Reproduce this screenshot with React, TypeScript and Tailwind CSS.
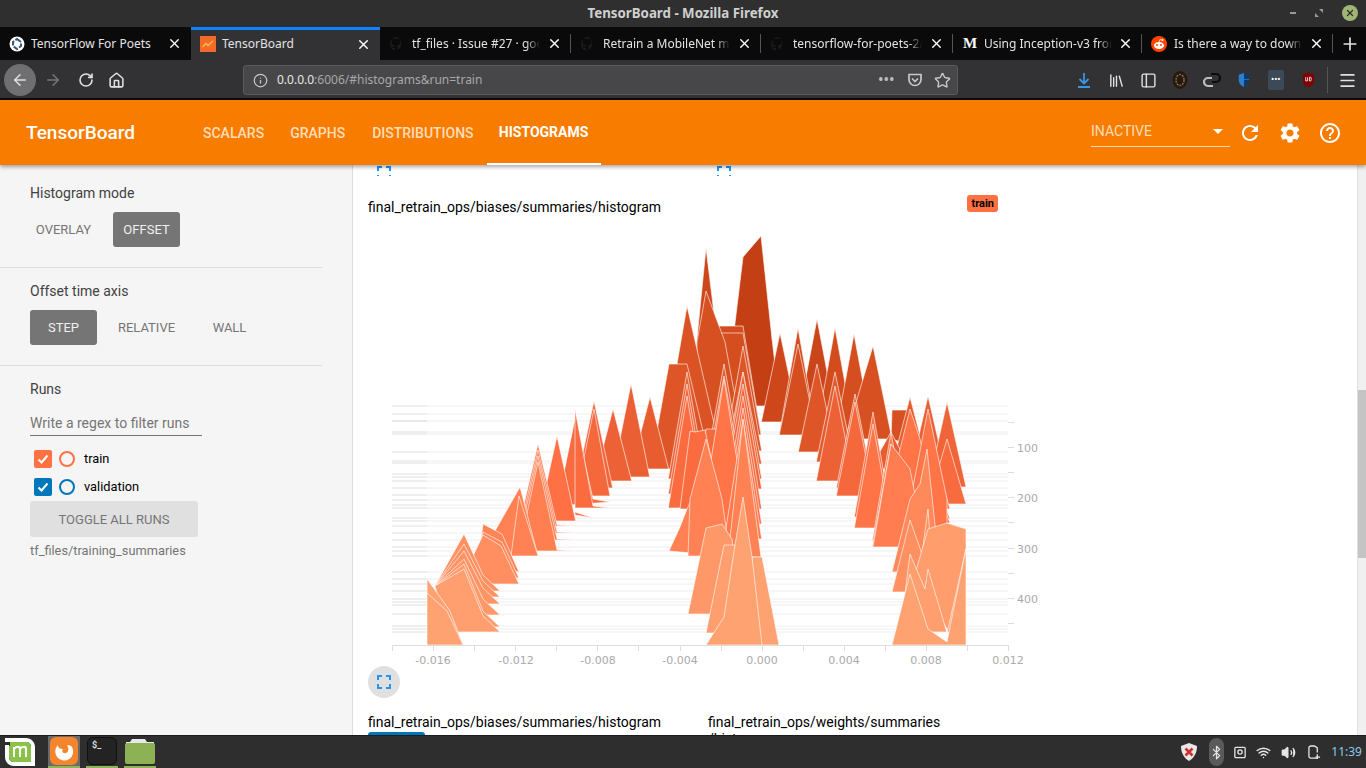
import React from "react";
import { ArrowLeft, ArrowRight, RotateCw, Home, Info, Star, Library, PanelLeft, Menu, X, Plus, Bluetooth, Wifi, Volume2 } from "lucide-react";

type Shape = { b: number; p: string };
const stops: [number, number[]][] = [
  [407, [196, 63, 20]],
  [450, [221, 85, 38]],
  [490, [240, 101, 58]],
  [520, [255, 112, 67]],
  [580, [255, 140, 94]],
  [646, [255, 162, 114]],
];
function col(b: number) {
  for (let i = 0; i < stops.length - 1; i++) {
    const [a, ca] = stops[i];
    const [z, cz] = stops[i + 1];
    if (b <= z) {
      const t = Math.max(0, (b - a) / (z - a));
      return `rgb(${ca.map((c, k) => Math.round(c + (cz[k] - c) * t)).join(",")})`;
    }
  }
  return "rgb(255,162,114)";
}
const poly = (b: number, ...n: number[]): Shape => {
  const pts: string[] = [];
  for (let i = 0; i < n.length; i += 2) pts.push(`${n[i]},${n[i + 1]}`);
  return { b, p: pts.join(" ") };
};
const tri = (x: number, peak: number, b: number, hw = 18.7) => poly(b, x - hw, b, x, peak, x + hw, b);
const nest = (x: number, peak: number, bases: number[], dp = 6) => bases.map((b, i) => tri(x, peak + i * dp, b));

const shapes: Shape[] = [
  poly(407, 725, 407, 743, 258, 761, 237, 772, 340, 780, 407),
  tri(817, 320, 418),
  poly(423, 688, 430, 706, 249, 722, 380, 724, 430),
  tri(780, 334, 423),
  ...nest(798, 329, [435, 436], 16),
  tri(835, 329, 432),
  tri(854, 335, 436),
  poly(440, 845, 440, 873, 347, 892, 440),
  poly(446, 663, 446, 687, 307, 713, 420, 720, 446),
  poly(440, 697, 440, 697, 343, 706, 292, 725, 343, 733, 387, 745, 440),
  poly(435, 708, 435, 718, 327, 743, 327, 761, 435),
  poly(436, 708, 436, 721, 334, 743, 334, 761, 436),
  tri(817, 365, 453),
  poly(452, 650, 470, 669, 365, 687, 365, 712, 470),
  tri(650, 398, 470),
  ...nest(743, 347, [452, 465], 26),
  tri(631, 385, 478),
  ...nest(835, 373, [463, 482], 14),
  tri(613, 410, 482),
  poly(473, 699, 473, 718, 432, 724, 430, 732, 473),
  tri(594, 402, 489),
  ...nest(855, 395, [489, 497], 8),
  poly(440, 891, 440, 892, 411, 907, 411, 925, 450),
  tri(910, 398, 470),
  poly(470, 870, 470, 891, 433, 910, 470),
  tri(928, 397, 478),
  poly(488, 928, 488, 947, 403, 966, 488),
  poly(505, 928, 505, 947, 440, 966, 505),
  poly(500, 697, 500, 706, 430, 724, 430, 745, 500),
  poly(509, 669, 509, 680, 483, 687, 468, 697, 465, 706, 509),
  poly(510, 680, 510, 690, 432, 695, 433, 705, 431, 720, 500, 725, 510),
  poly(510, 920, 510, 928, 440, 950, 510),
  poly(509, 575, 509, 575, 410, 593, 507, 610, 509),
  poly(507, 557, 507, 575, 420, 593, 500, 610, 503),
  poly(497, 576, 497, 594, 410, 605, 470, 610, 497),
  ...nest(687, 373, [480, 495, 509], 12),
  ...nest(724, 365, [470, 482, 495, 510], 12),
  ...nest(743, 373, [480, 490, 510, 525, 540], 12),
  poly(530, 700, 530, 724, 380, 748, 530),
  poly(519, 575, 513, 593, 519, 575, 516),
  tri(557, 437, 522),
  tri(873, 413, 518),
  tri(873, 425, 529),
  poly(530, 880, 530, 910, 410, 920, 440, 940, 530),
  poly(530, 905, 530, 928, 410, 947, 500, 947, 530),
  poly(512, 928, 512, 947, 512, 950, 520, 928, 520),
  ...[527, 534, 541, 552].map((b, i) => poly(b, 519, b, 538, 445 + i * 6, 557, b - 1, 575, b)),
  tri(891, 433, 542),
  tri(891, 445, 548),
  poly(548, 873, 548, 891, 445, 910, 470, 925, 548),
  poly(557, 495, 532, 520, 488, 538, 557, 510, 557),
  poly(557, 511, 557, 519, 497, 538, 557),
  poly(557, 669, 552, 680, 528, 687, 510, 706, 470, 725, 557),
  poly(557, 688, 557, 690, 500, 706, 440, 722, 500, 730, 557),
  poly(524, 928, 524, 947, 516, 950, 524),
  poly(573, 892, 573, 910, 500, 920, 485, 927, 450, 940, 573),
  poly(558, 728, 558, 743, 420, 761, 558),
  poly(593, 892, 593, 910, 521, 922, 555, 928, 510, 934, 593),
  poly(565, 478, 565, 483, 525, 502, 535, 519, 573),
  poly(575, 478, 575, 483, 533, 502, 543, 519, 579),
  poly(585, 473, 557, 483, 536, 501, 547, 519, 585, 470, 585),
  ...[[592, 535], [598, 545], [605, 552], [616, 560], [628, 565], [633, 570]].map(([b, p]) => poly(b, 435, 587, 464, p, 483, b - 16, 500, b, 448, b)),
  poly(615, 688, 615, 706, 529, 722, 525, 732, 540, 740, 615),
  poly(630, 905, 610, 928, 530, 947, 524, 966, 530, 966, 550, 950, 630, 947, 630, 930, 600),
  poly(633, 900, 633, 910, 555, 925, 590, 928, 570, 947, 634, 966, 550, 966, 633),
  poly(634, 706, 634, 724, 546, 735, 546, 745, 634),
  poly(646, 427, 646, 427, 580, 450, 612, 463, 646),
  poly(646, 427, 646, 427, 594, 447, 612, 463, 646),
  poly(646, 892, 646, 910, 575, 928, 630, 947, 643, 966, 550, 966, 646),
  poly(646, 752, 646, 752, 558, 762, 558, 779, 646),
  poly(646, 706, 646, 724, 618, 735, 546, 743, 498, 752, 558, 762, 646),
];
const sorted = [...shapes].sort((a, b) => a.b - b.b);

const lineYs = [407, 415, 422, 433, 435, 453, 462, 464, 475, 478, 482, 489, 496, 501, 506, 509, 519, 522, 527, 534, 541, 548, 552, 557, 573, 580, 585, 592, 600, 603, 606, 615, 627, 630, 633];

function Chart() {
  const xTicks = [392, 433, 474, 515, 556, 597, 638, 680, 721, 762, 803, 844, 885, 926, 967, 1008];
  return (
    <svg viewBox="368 225 670 450" className="block w-[670px] h-[450px] mt-[8px]">
      {lineYs.map((y) => (
        <g key={y}>
          <line x1={392} x2={1008} y1={y} y2={y} stroke="#eeeeee" strokeWidth={1} />
          <line x1={392} x2={427} y1={y} y2={y} stroke={y === 422 ? "#d9d9d9" : "#e6e6e6"} strokeWidth={1} />
        </g>
      ))}
      {sorted.map((s, i) => (
        <polygon key={i} points={s.p} fill={col(s.b)} stroke="#ffffff" strokeOpacity={0.6} strokeWidth={1} />
      ))}
      <line x1={392} x2={1008} y1={646.5} y2={646.5} stroke="#dddddd" />
      {xTicks.map((x) => (
        <line key={x} x1={x + 0.5} x2={x + 0.5} y1={646} y2={652} stroke="#dddddd" />
      ))}
      {[
        [433, "-0.016"], [516, "-0.012"], [598, "-0.008"], [680, "-0.004"], [762, "0.000"], [844, "0.004"], [926, "0.008"], [1008, "0.012"],
      ].map(([x, t]) => (
        <text key={t as string} x={x as number} y={664.5} textAnchor="middle" fontSize={11} fill="#aaaaaa" fontFamily="'DejaVu Sans',sans-serif">{t}</text>
      ))}
      {[423, 448, 473, 498, 523, 549, 574, 599, 624].map((y) => (
        <line key={y} x1={1008} x2={1014} y1={y + 0.5} y2={y + 0.5} stroke="#dddddd" />
      ))}
      {[[448, "100"], [498, "200"], [549, "300"], [599, "400"]].map(([y, t]) => (
        <text key={t as string} x={1017} y={(y as number) + 4.5} fontSize={11} fill="#aaaaaa" fontFamily="'DejaVu Sans',sans-serif">{t}</text>
      ))}
    </svg>
  );
}

function Expand({ className = "" }: { className?: string }) {
  return (
    <svg viewBox="0 0 14 14" className={`w-[14px] h-[14px] ${className}`} fill="none" stroke="#2196f3" strokeWidth={2}>
      <path d="M1 5V1H5M9 1H13V5M13 9V13H9M5 13H1V9" />
    </svg>
  );
}

const tabs = [
  { t: "TensorFlow For Poets", w: 191, i: "tf" },
  { t: "TensorBoard", w: 189, i: "tb", active: true },
  { t: "tf_files · Issue #27 · goo", w: 191, i: "gh" },
  { t: "Retrain a MobileNet mo", w: 190, i: "gh" },
  { t: "tensorflow-for-poets-2/s", w: 192, i: "gh" },
  { t: "Using Inception-v3 fron", w: 189, i: "m" },
  { t: "Is there a way to downl", w: 191, i: "r" },
];

function Fav({ k }: { k: string }) {
  if (k === "tf")
    return (
      <svg viewBox="0 0 16 16" className="w-4 h-4 shrink-0">
        <circle cx="8" cy="8" r="7.5" fill="#fff" />
        <path d="M8 3 12 6V10L8 13 4 10V6Z" fill="none" stroke="#37567a" strokeWidth="2" strokeDasharray="5 1.5" />
      </svg>
    );
  if (k === "tb")
    return (
      <svg viewBox="0 0 16 16" className="w-4 h-4 shrink-0">
        <rect width="16" height="16" fill="#f26b2a" />
        <path d="M2.5 11 6 7.5 8 9.5 13 5" fill="none" stroke="#ffc13b" strokeWidth="1.3" />
      </svg>
    );
  if (k === "gh")
    return (
      <svg viewBox="0 0 16 16" className="w-4 h-4 shrink-0">
        <path d="M8 1a7 7 0 0 0-2.2 13.6V12C3.5 12.500 3 11 3 11 2.600 10 2 9.800 2 9.800c-.7-.5 0-.5 0-.5.800 0 1.200.8 1.200.8.700 1.200 1.800.9 2.300.6 0-.5.300-.9.500-1.100C4.300 9.400 2.500 8.700 2.500 6c0-.8.300-1.400.700-1.900 0-.2-.3-.9 0-1.900 0 0 .6-.2 2 .7a7 7 0 0 1 3.600 0c1.400-.9 2-.7 2-.7.3 1 0 1.700 0 1.900.4.500.7 1.100.7 1.900 0 2.700-1.800 3.400-3.500 3.600.3.200.5.700.5 1.300v2.700A7 7 0 0 0 8 1Z" fill="#1c1c1c" />
      </svg>
    );
  if (k === "m")
    return <span className="w-4 shrink-0 text-center text-white text-[15px] font-bold leading-none [font-family:'Liberation_Serif',serif]">M</span>;
  return (
    <svg viewBox="0 0 16 16" className="w-4 h-4 shrink-0">
      <circle cx="8" cy="8" r="8" fill="#ff4500" />
      <ellipse cx="8" cy="9.500" rx="5" ry="3.500" fill="#fff" />
      <circle cx="6" cy="9" r="1" fill="#ff4500" />
      <circle cx="10" cy="9" r="1" fill="#ff4500" />
      <circle cx="11.500" cy="4" r="1" fill="#fff" />
      <path d="M8 6 9 3.500 11 4" fill="none" stroke="#fff" strokeWidth=".7" />
    </svg>
  );
}

function Tab({ t, w, i, active }: { t: string; w: number; i: string; active?: boolean }) {
  const fade = i === "gh" || i === "m" || i === "r";
  return (
    <div style={{ width: w }} className={`relative shrink-0 h-full flex items-center pl-[9px] pr-[9px] ${i === "gh" || i === "r" ? "gap-[7px]" : "gap-[6px]"} ${active ? "bg-[#323234] border-t-[3px] border-[#0a84ff] pb-[2px]" : ""}`}>
      <Fav k={i} />
      <span className={`flex-1 overflow-hidden whitespace-nowrap text-[12px] text-[#e3e3e3] ${fade ? "[mask-image:linear-gradient(to_left,transparent,black_14px)]" : ""}`}>{t}</span>
      <X size={15} strokeWidth={2.2} className="text-white shrink-0" />
      {!active && i !== "tf" && <span className="absolute right-0 top-[7px] bottom-[7px] w-px bg-[#555]" />}
    </div>
  );
}

const navCls = "text-[14px] font-medium text-[#ffdcb8]";

function ToggleBtn({ children, on }: { children: React.ReactNode; on?: boolean }) {
  return (
    <div className={`h-[35px] w-[67px] flex items-center justify-center rounded-[3px] text-[13px] ${on ? "bg-[#757575] text-[#f0f0f0]" : "text-[#757575]"}`}>{children}</div>
  );
}

function Run({ name, color, mt }: { name: string; color: string; mt: string }) {
  return (
    <div className={`flex items-center h-[18px] pl-1 ${mt}`}>
      <span style={{ background: color }} className="w-[18px] h-[18px] rounded-[2px] flex items-center justify-center">
        <svg viewBox="0 0 14 14" className="w-[14px] h-[14px]" fill="none" stroke="#fff" strokeWidth="2"><path d="M2.500 7.500 5.500 10.500 11.500 3.500" /></svg>
      </span>
      <span style={{ borderColor: color }} className="ml-[7px] w-[16px] h-[16px] rounded-full border-2" />
      <span className="ml-[9px] text-[12.8px] text-black">{name}</span>
    </div>
  );
}

function Slot({ children }: { children: React.ReactNode }) {
  return <div className="w-[32px] flex items-center justify-center">{children}</div>;
}

export default function App() {
  return (
    <div className="w-[1366px] h-[768px] overflow-hidden flex flex-col bg-white [font-family:Roboto,sans-serif]">
      {/* Title bar */}
      <div className="relative h-[27px] shrink-0 bg-[#2f2f2f] flex items-center justify-center [font-family:'Noto_Sans',sans-serif]">
        <span className="text-[13.3px] font-bold text-[#cfcfcf]">TensorBoard - Mozilla Firefox</span>
        <div className="absolute right-[8px] top-[5px] flex items-center gap-[19px]">
          <span className="w-[6px] h-[2px] bg-[#999]" />
          <svg viewBox="0 0 10 10" className="w-[8px] h-[8px]"><path d="M5 0H10V5ZM5 10H0V5Z" fill="#999" /></svg>
          <span className="w-[16px] h-[16px] rounded-full bg-[#9fb573] flex items-center justify-center"><X size={10} strokeWidth={3} className="text-[#2f2f2f]" /></span>
        </div>
      </div>
      {/* Tabs */}
      <div className="h-[33px] shrink-0 bg-[#0a0a0a] flex items-stretch [font-family:'Noto_Sans',sans-serif]">
        {tabs.map((t, i) => <Tab key={i} {...t} />)}
        <div className="flex-1 flex items-center justify-center"><Plus size={20} strokeWidth={2} className="text-[#e3e3e3]" /></div>
      </div>
      {/* Toolbar */}
      <div className="h-[40px] shrink-0 bg-[#323234] border-b-2 border-[#0c0c0c] pt-[2px] flex items-center text-[#e0e0e0] [font-family:'Noto_Sans',sans-serif]">
        <div className="ml-[4px] w-[32px] h-[32px] rounded-full bg-[#6f6f71] flex items-center justify-center"><ArrowLeft size={18} /></div>
        <ArrowRight size={18} className="ml-[8px] text-[#77777a]" />
        <RotateCw size={16} strokeWidth={2.4} className="ml-[16px]" />
        <Home size={17} strokeWidth={2.2} className="ml-[14px]" />
        <div className="ml-[118px] w-[715px] h-[30px] bg-[#474749] border border-[#5a5a5c] rounded-[3px] flex items-center pl-[9px] pr-[6px]">
          <Info size={15} className="text-[#c8c8c8]" />
          <span className="ml-[9px] text-[12px] text-[#e8e8e8]">0.0.0.0</span>
          <span className="text-[12px] text-[#a8a8a8]">:6006/#histograms&amp;run=train</span>
          <span className="ml-auto text-[#bdbdbd] text-[12px] font-bold tracking-[1px]">•••</span>
          <svg viewBox="0 0 16 16" className="ml-[12px] w-[16px] h-[16px]" fill="none" stroke="#c8c8c8" strokeWidth="1.700"><path d="M2 2.500H14V7.500A6 6 0 0 1 2 7.500Z" /><path d="M5 6.500 8 9.500 11 6.500" /></svg>
          <Star size={17} strokeWidth={2} className="ml-[11px] text-[#c8c8c8]" />
        </div>
        <div className="ml-[110px] flex items-center">
          <Slot><svg viewBox="0 0 16 16" className="w-[16px] h-[16px]" fill="none" stroke="#3a94e8" strokeWidth="1.800"><path d="M8 1V11M3.500 7 8 11.500 12.500 7M2 15H14" /></svg></Slot>
          <Slot><Library size={17} /></Slot>
          <Slot><PanelLeft size={17} /></Slot>
          <Slot><svg viewBox="0 0 16 20" className="w-[16px] h-[20px]"><ellipse cx="8" cy="10" rx="7.500" ry="9" fill="#241a12" /><ellipse cx="8" cy="10" rx="4" ry="5.500" fill="none" stroke="#8a6a3c" strokeWidth="1.500" strokeDasharray="2 1" /></svg></Slot>
          <Slot><svg viewBox="0 0 18 18" className="w-[18px] h-[18px]" fill="none" strokeWidth="2.200"><path d="M8 3H13A3.500 3.500 0 0 1 13 11H9" stroke="#0c0c0c" /><path d="M10 15H5A3.500 3.500 0 0 1 5 7H9" stroke="#bdbdbd" /></svg></Slot>
          <Slot><svg viewBox="0 0 16 18" className="w-[14px] h-[18px]"><path d="M8 1 14 3V9C14 13 11 15.500 8 17Z" fill="#103a66" /><path d="M8 1 2 3V9C2 13 5 15.500 8 17V9H14V8H8Z" fill="#2a7fd0" /></svg></Slot>
          <Slot><span className="w-[16px] h-[20px] rounded-[2px] bg-[#3c4a57] flex items-center justify-center text-white text-[7px] font-bold tracking-[.5px]">•••</span></Slot>
          <Slot><svg viewBox="0 0 16 18" className="w-[15px] h-[18px]"><path d="M8 1 14 3V10C14 13 11 15.500 8 17 5 15.500 2 13 2 10V3Z" fill="#800000" /><path d="M5 6V10H7V6M9 6V10H10.500L11 8 10.500 6Z" fill="none" stroke="#eee" strokeWidth=".9" /></svg></Slot>
        </div>
        <span className="ml-[3px] w-px h-[26px] bg-[#555]" />
        <div className="w-[38px] flex justify-center"><Menu size={19} strokeWidth={2.2} /></div>
      </div>
      {/* Orange header */}
      <div className="relative z-10 h-[65px] shrink-0 bg-[#f77c00] shadow-[0_2px_4px_rgba(0,0,0,.35)] flex items-center pl-[26px]">
        <span className="text-[19px] font-medium text-white pt-[2px]">TensorBoard</span>
        <div className="ml-[68px] flex items-center h-full pt-[2px]">
          <span className={navCls}>SCALARS</span>
          <span className={`ml-[26px] ${navCls}`}>GRAPHS</span>
          <span className={`ml-[27px] ${navCls}`}>DISTRIBUTIONS</span>
          <div className="relative ml-[13px] h-full w-[114px] flex items-center justify-center text-[14px] font-bold text-white border-b-2 border-white">HISTOGRAMS</div>
        </div>
        <div className="ml-auto mr-[136px] w-[139px] h-[30px] border-b border-[#ffd9ae] flex items-center justify-between mt-[-2px] pt-[1px]">
          <span className="text-[14px] text-[#ffdcb8]">INACTIVE</span>
          <span className="mr-[7px] w-0 h-0 border-x-[5px] border-x-transparent border-t-[5px] border-t-white" />
        </div>
        <div className="absolute right-[24px] top-[21px] flex items-center gap-[16px] text-white">
          <svg viewBox="0 0 24 24" className="w-[24px] h-[24px]" fill="#fff"><path d="M17.65 6.35C16.2 4.9 14.21 4 12 4c-4.42 0-7.99 3.58-7.99 8s3.57 8 7.99 8c3.73 0 6.84-2.55 7.73-6h-2.08c-.82 2.33-3.04 4-5.65 4-3.31 0-6-2.69-6-6s2.69-6 6-6c1.66 0 3.14.69 4.22 1.78L13 11h7V4l-2.35 2.35z" /></svg>
          <svg viewBox="0 0 24 24" className="w-[24px] h-[24px]" fill="#fff"><path d="M19.14 12.94c.04-.3.06-.61.06-.94 0-.32-.02-.64-.07-.94l2.03-1.58c.18-.14.23-.41.12-.61l-1.92-3.32c-.12-.22-.37-.29-.59-.22l-2.39.96c-.5-.38-1.03-.7-1.62-.94l-.36-2.54c-.04-.24-.24-.41-.48-.41h-3.84c-.24 0-.43.17-.47.41l-.36 2.54c-.59.24-1.13.57-1.62.94l-2.39-.96c-.22-.08-.47 0-.59.22L2.74 8.87c-.12.21-.08.47.12.61l2.03 1.58c-.05.3-.09.63-.09.94s.02.64.07.94l-2.03 1.58c-.18.14-.23.41-.12.61l1.92 3.32c.12.22.37.29.59.22l2.39-.96c.5.38 1.03.7 1.62.94l.36 2.54c.05.24.24.41.48.41h3.84c.24 0 .44-.17.47-.41l.36-2.54c.59-.24 1.13-.56 1.62-.94l2.39.96c.22.08.47 0 .59-.22l1.92-3.32c.12-.22.07-.47-.12-.61l-2.01-1.58zM12 15.6c-1.98 0-3.6-1.62-3.6-3.6s1.62-3.6 3.6-3.6 3.6 1.62 3.6 3.6-1.62 3.6-3.6 3.6z" /></svg>
          <svg viewBox="0 0 24 24" className="w-[24px] h-[24px]" fill="#fff"><path d="M11 18h2v-2h-2v2zm1-16C6.48 2 2 6.48 2 12s4.48 10 10 10 10-4.48 10-10S17.52 2 12 2zm0 18c-4.41 0-8-3.59-8-8s3.59-8 8-8 8 3.59 8 8-3.59 8-8 8zm0-14c-2.21 0-4 1.79-4 4h2c0-1.1.9-2 2-2s2 .9 2 2c0 2-3 1.75-3 5h2c0-2.25 3-2.5 3-5 0-2.21-1.79-4-4-4z" /></svg>
        </div>
      </div>
      {/* Main */}
      <div className="flex-1 min-h-0 flex">
        <aside className="w-[353px] shrink-0 bg-[#f5f5f5] border-r border-[#dddddd] text-[14px] text-[#424242]">
          <div className="w-[322px] h-[103px] border-b border-[#dddddd] pl-[30px] pt-[19px]">
            <div className="leading-[18px]">Histogram mode</div>
            <div className="flex mt-[10px] gap-[16px]"><ToggleBtn>OVERLAY</ToggleBtn><ToggleBtn on>OFFSET</ToggleBtn></div>
          </div>
          <div className="w-[322px] h-[98px] border-b border-[#dddddd] pl-[30px] pt-[14px]">
            <div className="leading-[18px]">Offset time axis</div>
            <div className="flex mt-[10px] gap-[16px]"><ToggleBtn on>STEP</ToggleBtn><ToggleBtn>RELATIVE</ToggleBtn><ToggleBtn>WALL</ToggleBtn></div>
          </div>
          <div className="pl-[30px] pt-[14px]">
            <div className="leading-[18px]">Runs</div>
            <div className="mt-[17px] w-[172px] h-[21px] border-b border-[#757575] text-[#757575] leading-[17px]">Write a regex to filter runs</div>
            <Run name="train" color="#ff7043" mt="mt-[14px]" />
            <Run name="validation" color="#0077bb" mt="mt-[10px]" />
            <div className="mt-[5px] w-[168px] h-[36px] bg-[#e0e0e0] rounded-[3px] flex items-center justify-center pt-[1px] text-[13px] text-[#757575]">TOGGLE ALL RUNS</div>
            <div className="mt-[4px] text-[12.8px] text-[#757575]">tf_files/training_summaries</div>
          </div>
        </aside>
        <main className="flex-1 min-w-0 overflow-hidden text-[14px] text-black pl-[15px]">
          <div className="h-[11px] flex items-end overflow-hidden pl-[9px] gap-[326px]"><Expand className="mb-[-4px]" /><Expand className="mb-[-4px]" /></div>
          <div className="flex items-start justify-between w-[630px] mt-[22px]">
            <span className="leading-[17px] mt-[1px]">final_retrain_ops/biases/summaries/histogram</span>
            <span className="mt-[-3px] px-[4px] h-[17px] rounded-[3px] bg-[#ff7043] text-[11px] font-bold leading-[17px] text-black">train</span>
          </div>
          <Chart />
          <div className="mt-[-8px] w-[32px] h-[32px] rounded-full bg-[#e0e0e0] flex items-center justify-center"><Expand /></div>
          <div className="mt-[15px] flex items-start">
            <div className="w-[340px]">
              <div className="leading-[17px] mt-[1px]">final_retrain_ops/biases/summaries/histogram</div>
              <div className="mt-[1px] w-[57px] h-[17px] bg-[#0077bb] rounded-t-[3px]" />
            </div>
            <div className="w-[240px] leading-[17px] mt-[1px] break-words">final_retrain_ops/weights/summaries /histogram</div>
          </div>
        </main>
        <div className="w-[9px] shrink-0 bg-[#f0f0f0] border-l border-[#e0e0e0] pt-[225px]">
          <div className="h-[168px] bg-[#c4c4c4]" />
        </div>
      </div>
      {/* Taskbar */}
      <div className="relative z-10 h-[33px] shrink-0 bg-[#2e2e2e] border-t border-[#1c1c1c] flex items-stretch">
        <svg viewBox="0 0 32 30" className="ml-[4px] mt-[1px] w-[32px] h-[30px]">
          <path d="M1 1H22C27 1 31 5 31 10V29H10C5 29 1 25 1 20V8H5V20C5 23 7 25 10 25H27V10C27 7 25 5 22 5H1Z" fill="#fff" />
          <path d="M6 5H22C25 5 27 7 27 10V25H10C7 25 5 23 5 20V9H6Z" fill="#8bc34a" />
          <path d="M10 10V20M10 12C12 9 16 9 16 12V20M16 12C18 9 22 9 22 12V20" fill="none" stroke="#fff" strokeWidth="2" />
        </svg>
        <div className="relative ml-[12px] w-[32px] bg-[#6a6a6a] border-b-2 border-[#8fb35a] flex items-center justify-center">
          <svg viewBox="0 0 28 28" className="w-[28px] h-[28px]"><rect x="0" y="0" width="28" height="28" rx="6" fill="#f5842c" /><path d="M22 10A9 9 0 1 1 8 8C8 11 10 12 13 12 11 14 13 17 16 16 19 15 19 11 17 8 20 8 22 9 22 10Z" fill="#fff" /></svg>
        </div>
        <div className="ml-[6px] w-[32px] border-b-2 border-[#8fb35a] flex items-center justify-center">
          <div className="w-[30px] h-[28px] rounded-[6px] bg-[#232323] border border-[#111] text-[#ddd] text-[9px] leading-[14px] pl-[4px] font-bold">$_</div>
        </div>
        <div className="ml-[6px] w-[32px] border-b-2 border-[#8fb35a] flex items-center justify-center">
          <svg viewBox="0 0 30 26" className="w-[30px] h-[26px]"><path d="M1 4H5L7 1H20L22 4H29V6H1Z" fill="#e8e8e8" /><rect x="0" y="5" width="30" height="21" rx="2" fill="#8db255" /></svg>
        </div>
        <div className="ml-auto flex items-center pr-[4px] text-[#e6e6e6]">
          <svg viewBox="0 0 20 20" className="w-[20px] h-[20px]"><path d="M10 1 18 4C18 11 15 16 10 19 5 16 2 11 2 4Z" fill="#e8e8e8" /><path d="M6.500 6.500 13.500 13.500M13.500 6.500 6.500 13.500" stroke="#d32f2f" strokeWidth="2.600" /></svg>
          <span className="ml-[10px] w-[15px] h-[28px] rounded-full bg-[#5a5a5a] flex items-center justify-center"><Bluetooth size={15} /></span>
          <svg viewBox="0 0 14 14" className="ml-[10px] w-[12px] h-[13px]" fill="none" stroke="#e6e6e6" strokeWidth="1.500"><rect x="1" y="1" width="12" height="12" rx="1" /><circle cx="7" cy="6.500" r="2.500" /></svg>
          <Wifi size={15} strokeWidth={2.400} className="ml-[10px]" />
          <Volume2 size={15} fill="#e6e6e6" className="ml-[10px]" />
          <svg viewBox="0 0 14 16" className="ml-[12px] w-[13px] h-[15px]" fill="none" stroke="#e6e6e6" strokeWidth="1.400"><path d="M1 3C1 2 2 1 3 1H7L10 3V8M10 14H3C2 14 1 13 1 12V3" /><path d="M10 10V15M8 13 13 13" /></svg>
          <span className="ml-[10px] text-[12px] text-[#8cc8ec] [font-family:'Noto_Sans',sans-serif]">11:39</span>
        </div>
      </div>
    </div>
  );
}
